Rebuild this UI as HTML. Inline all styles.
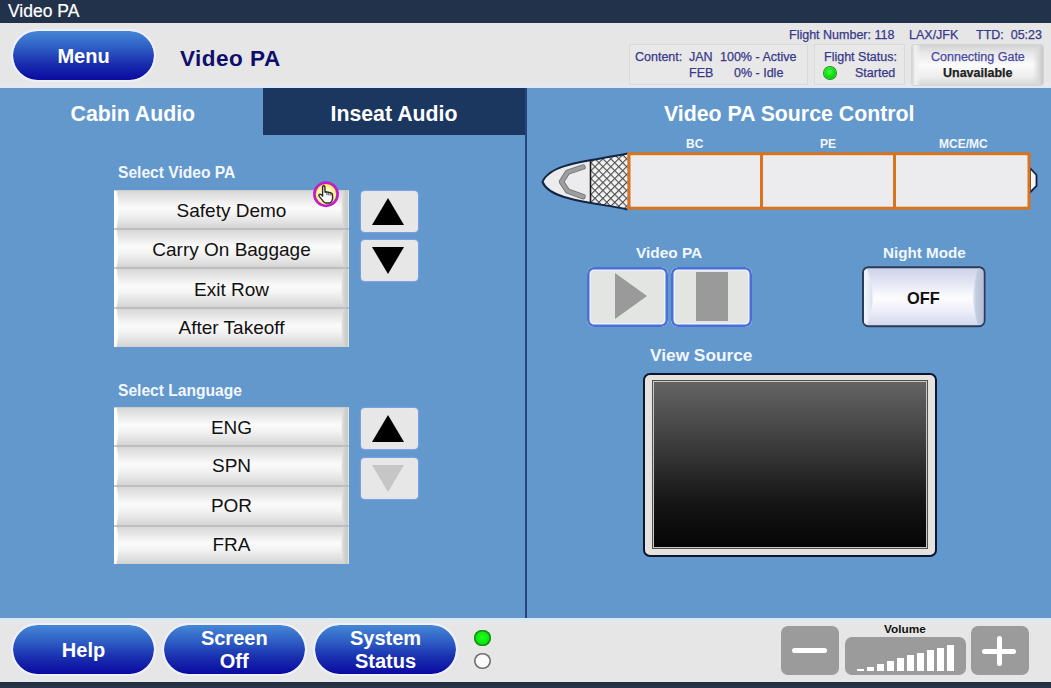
<!DOCTYPE html>
<html><head><meta charset="utf-8">
<style>
*{margin:0;padding:0;box-sizing:border-box}
html,body{width:1051px;height:688px;overflow:hidden;background:#e6e6e6;font-family:"Liberation Sans",sans-serif}
.a{position:absolute}
#title{left:0;top:0;width:1051px;height:23px;background:#21324a}
#title span{position:absolute;left:8px;top:0.5px;font-size:17.5px;color:#fff;line-height:20px;-webkit-text-stroke:0.2px #fff}
#topband{left:0;top:23px;width:1051px;height:65px;background:linear-gradient(#e6e6e6 0,#e6e6e6 58px,#e9e8e6 61px,#e0e9f8 63px,#dde8f8 65px)}
#blue{left:0;top:88px;width:1051px;height:530px;background:#6398cd;border-top:1px solid #6e93c2}
#botband{left:0;top:618px;width:1051px;height:64px;background:linear-gradient(#e6e6e6 0,#e6e6e6 56px,#e6e8ec 58px,#e6e8ec 64px);border-top:4px solid #dceaf0}
#dark{left:0;top:682px;width:1051px;height:6px;background:linear-gradient(#222e3e,#253548)}
.pill{position:absolute;border-radius:27px;background:linear-gradient(#4587d6 0%,#2d5cc4 35%,#1a30b0 65%,#0a0aa0 100%) padding-box;border:2px solid #eef0ff;color:#fff;font-weight:bold;text-align:center}
.lbl{position:absolute;color:#f2f7ff;font-weight:bold;white-space:nowrap;line-height:1}
.txt{position:absolute;white-space:nowrap;line-height:1}
.info{position:absolute;white-space:nowrap;line-height:1;font-size:12.5px;color:#383888;margin-top:0.5px;-webkit-text-stroke:0.25px currentColor}
.box{position:absolute;border:1px solid #dadada;background:#e8e8e8}
.lst{position:absolute;left:114px;width:235px;height:39px;font-size:19px;color:#111;text-align:center;line-height:39px;
 background:
  linear-gradient(90deg,rgba(255,255,255,0) 0,#fff 1.5px,#fff 3px,rgba(255,255,255,0) 8px,rgba(255,255,255,0) 227px,rgba(160,160,160,.5) 231px,rgba(190,190,190,.6) 235px),
  linear-gradient(#b8b8b8 0,#d8d8d8 1.5px,#e8e8e8 20%,#fafafa 45%,#f2f2f2 60%,#dcdcdc 88%,#cdcdcd 100%)}
.arr{position:absolute;left:361px;width:57px;height:40.5px;background:#e7e7e7;border-radius:4px;box-shadow:0 0 0 1.2px #789fe4}
.tri{position:absolute;width:0;height:0}
</style></head><body>
<div id="title" class="a"><span>Video PA</span></div>
<div id="topband" class="a"></div>
<div id="blue" class="a"></div>
<div id="botband" class="a"></div>
<div id="dark" class="a"></div>

<!-- Menu -->
<div class="pill" style="left:11px;top:28.5px;width:145px;height:53px;font-size:20px;line-height:50px">Menu</div>
<div class="txt" style="left:180px;top:47.5px;font-size:22.5px;letter-spacing:0.5px;font-weight:bold;color:#0e0e6c">Video PA</div>

<!-- top right info -->
<div class="info" style="left:789px;top:28px">Flight Number: 118</div>
<div class="info" style="left:909px;top:28px">LAX/JFK</div>
<div class="info" style="left:976px;top:28px">TTD:&nbsp; 05:23</div>

<div class="box" style="left:629px;top:44px;width:179px;height:41px"></div>
<div class="info" style="left:635px;top:50px">Content:</div>
<div class="info" style="left:689px;top:50px">JAN</div>
<div class="info" style="left:720px;top:50px">100% - Active</div>
<div class="info" style="left:689px;top:66px">FEB</div>
<div class="info" style="left:734px;top:66px">0% - Idle</div>

<div class="box" style="left:814px;top:44px;width:91px;height:41px"></div>
<div class="info" style="left:824px;top:50px">Flight Status:</div>
<div class="a" style="left:824px;top:67px;width:12px;height:12px;border-radius:50%;background:radial-gradient(circle at 45% 40%,#3cff3c,#00d000 70%);box-shadow:0 0 0 1px #1f8a1f"></div>
<div class="info" style="left:855px;top:66px">Started</div>

<div class="a" style="left:912px;top:45px;width:131px;height:40px;border-radius:3px;box-shadow:0 0 0 1px #d4d4d4;background:linear-gradient(90deg,#d2d2d2 0,#f2f2f2 3px,rgba(255,255,255,0) 9px,rgba(255,255,255,0) 121px,#dadada 127px,#c6c6c6 131px),linear-gradient(#d2d2d2 0,#e6e6e6 18%,#fbfbfb 50%,#ededed 80%,#d6d6d6 100%)"></div>
<div class="info" style="left:931px;top:50px;color:#4a4aa2">Connecting Gate</div>
<div class="info" style="left:943px;top:66px;font-weight:bold;color:#222">Unavailable</div>

<!-- tabs -->
<div class="a" style="left:263px;top:88px;width:264px;height:47px;background:#1b365f"></div>
<div class="lbl" style="left:70.5px;top:103.5px;font-size:21.3px;color:#fff">Cabin Audio</div>
<div class="lbl" style="left:330.5px;top:103.5px;font-size:21.3px;color:#fff">Inseat Audio</div>
<div class="a" style="left:525px;top:88px;width:2px;height:530px;background:#22467a"></div>

<!-- Select Video PA -->
<div class="lbl" style="left:118px;top:164.5px;font-size:15.6px">Select Video PA</div>
<svg class="a" style="left:114px;top:190px" width="235" height="157" viewBox="0 0 235 157">
<defs><linearGradient id="lg1" x1="0" y1="0" x2="0" y2="1"><stop offset="0" stop-color="#d6d6d6"/><stop offset="0.18" stop-color="#e4e4e4"/><stop offset="0.45" stop-color="#fbfbfb"/><stop offset="0.62" stop-color="#f3f3f3"/><stop offset="0.85" stop-color="#e0e0e0"/><stop offset="1" stop-color="#d2d2d2"/></linearGradient><linearGradient id="lg1r" x1="0" y1="0" x2="1" y2="0"><stop offset="0" stop-color="#e2e2e0"/><stop offset="0.5" stop-color="#cfcfcc"/><stop offset="1" stop-color="#c9c9c6"/></linearGradient></defs>
<rect x="0" y="0" width="235" height="39" fill="url(#lg1)"/>
<path d="M0 0 L2.5 0 Q6.5 19.5 2.5 39 L0 39 Z" fill="#ffffff" opacity="0.95"/>
<path d="M235 0 L229.5 0 Q225.5 19.5 229.5 39 L235 39 Z" fill="url(#lg1r)"/>
<rect x="234" y="0" width="1" height="39" fill="#d8e6f0"/>
<text x="117.5" y="27.3" text-anchor="middle" font-family="Liberation Sans" font-size="19" fill="#111">Safety Demo</text>
<rect x="0" y="39" width="235" height="39" fill="url(#lg1)"/>
<path d="M0 39 L2.5 39 Q6.5 58.5 2.5 78 L0 78 Z" fill="#ffffff" opacity="0.95"/>
<path d="M235 39 L229.5 39 Q225.5 58.5 229.5 78 L235 78 Z" fill="url(#lg1r)"/>
<rect x="234" y="39" width="1" height="39" fill="#d8e6f0"/>
<rect x="0" y="38.25" width="235" height="1.5" fill="#b6b6b6"/>
<text x="117.5" y="65.7" text-anchor="middle" font-family="Liberation Sans" font-size="19" fill="#111">Carry On Baggage</text>
<rect x="0" y="78" width="235" height="40" fill="url(#lg1)"/>
<path d="M0 78 L2.5 78 Q6.5 98.0 2.5 118 L0 118 Z" fill="#ffffff" opacity="0.95"/>
<path d="M235 78 L229.5 78 Q225.5 98.0 229.5 118 L235 118 Z" fill="url(#lg1r)"/>
<rect x="234" y="78" width="1" height="40" fill="#d8e6f0"/>
<rect x="0" y="77.25" width="235" height="1.5" fill="#b6b6b6"/>
<text x="117.5" y="105.7" text-anchor="middle" font-family="Liberation Sans" font-size="19" fill="#111">Exit Row</text>
<rect x="0" y="118" width="235" height="39" fill="url(#lg1)"/>
<path d="M0 118 L2.5 118 Q6.5 137.5 2.5 157 L0 157 Z" fill="#ffffff" opacity="0.95"/>
<path d="M235 118 L229.5 118 Q225.5 137.5 229.5 157 L235 157 Z" fill="url(#lg1r)"/>
<rect x="234" y="118" width="1" height="39" fill="#d8e6f0"/>
<rect x="0" y="117.25" width="235" height="1.5" fill="#b6b6b6"/>
<text x="117.5" y="143.7" text-anchor="middle" font-family="Liberation Sans" font-size="19" fill="#111">After Takeoff</text>
<rect x="0" y="0" width="235" height="1" fill="#cdc9c0" opacity="0.8"/>
</svg>
<div class="arr" style="top:191px"><div class="tri" style="left:11px;top:7px;border-left:16.8px solid transparent;border-right:16.8px solid transparent;border-bottom:27px solid #000"></div></div>
<div class="arr" style="top:240px"><div class="tri" style="left:11px;top:6.5px;border-left:16.8px solid transparent;border-right:16.8px solid transparent;border-top:27.5px solid #000"></div></div>

<!-- Select Language -->
<div class="lbl" style="left:118px;top:382.5px;font-size:15.6px">Select Language</div>
<svg class="a" style="left:114px;top:407px" width="235" height="157" viewBox="0 0 235 157">
<defs><linearGradient id="lg2" x1="0" y1="0" x2="0" y2="1"><stop offset="0" stop-color="#d6d6d6"/><stop offset="0.18" stop-color="#e4e4e4"/><stop offset="0.45" stop-color="#fbfbfb"/><stop offset="0.62" stop-color="#f3f3f3"/><stop offset="0.85" stop-color="#e0e0e0"/><stop offset="1" stop-color="#d2d2d2"/></linearGradient><linearGradient id="lg2r" x1="0" y1="0" x2="1" y2="0"><stop offset="0" stop-color="#e2e2e0"/><stop offset="0.5" stop-color="#cfcfcc"/><stop offset="1" stop-color="#c9c9c6"/></linearGradient></defs>
<rect x="0" y="0" width="235" height="39" fill="url(#lg2)"/>
<path d="M0 0 L2.5 0 Q6.5 19.5 2.5 39 L0 39 Z" fill="#ffffff" opacity="0.95"/>
<path d="M235 0 L229.5 0 Q225.5 19.5 229.5 39 L235 39 Z" fill="url(#lg2r)"/>
<rect x="234" y="0" width="1" height="39" fill="#d8e6f0"/>
<text x="117.5" y="26.8" text-anchor="middle" font-family="Liberation Sans" font-size="19" fill="#111">ENG</text>
<rect x="0" y="39" width="235" height="40" fill="url(#lg2)"/>
<path d="M0 39 L2.5 39 Q6.5 59.0 2.5 79 L0 79 Z" fill="#ffffff" opacity="0.95"/>
<path d="M235 39 L229.5 39 Q225.5 59.0 229.5 79 L235 79 Z" fill="url(#lg2r)"/>
<rect x="234" y="39" width="1" height="40" fill="#d8e6f0"/>
<rect x="0" y="38.25" width="235" height="1.5" fill="#b6b6b6"/>
<text x="117.5" y="65" text-anchor="middle" font-family="Liberation Sans" font-size="19" fill="#111">SPN</text>
<rect x="0" y="79" width="235" height="40" fill="url(#lg2)"/>
<path d="M0 79 L2.5 79 Q6.5 99.0 2.5 119 L0 119 Z" fill="#ffffff" opacity="0.95"/>
<path d="M235 79 L229.5 79 Q225.5 99.0 229.5 119 L235 119 Z" fill="url(#lg2r)"/>
<rect x="234" y="79" width="1" height="40" fill="#d8e6f0"/>
<rect x="0" y="78.25" width="235" height="1.5" fill="#b6b6b6"/>
<text x="117.5" y="105.3" text-anchor="middle" font-family="Liberation Sans" font-size="19" fill="#111">POR</text>
<rect x="0" y="119" width="235" height="38" fill="url(#lg2)"/>
<path d="M0 119 L2.5 119 Q6.5 138.0 2.5 157 L0 157 Z" fill="#ffffff" opacity="0.95"/>
<path d="M235 119 L229.5 119 Q225.5 138.0 229.5 157 L235 157 Z" fill="url(#lg2r)"/>
<rect x="234" y="119" width="1" height="38" fill="#d8e6f0"/>
<rect x="0" y="118.25" width="235" height="1.5" fill="#b6b6b6"/>
<text x="117.5" y="144" text-anchor="middle" font-family="Liberation Sans" font-size="19" fill="#111">FRA</text>
<rect x="0" y="0" width="235" height="1" fill="#cdc9c0" opacity="0.8"/>
</svg>
<div class="arr" style="top:408px"><div class="tri" style="left:11px;top:7px;border-left:16.8px solid transparent;border-right:16.8px solid transparent;border-bottom:27px solid #000"></div></div>
<div class="arr" style="top:458px"><div class="tri" style="left:11px;top:6.5px;border-left:16.8px solid transparent;border-right:16.8px solid transparent;border-top:27.5px solid #c6c6c6"></div></div>

<!-- cursor -->
<svg class="a" style="left:312px;top:181px" width="28" height="28" viewBox="0 0 28 28">
 <defs><radialGradient id="cg" cx="50%" cy="55%" r="50%"><stop offset="0" stop-color="#ffffff"/><stop offset="0.55" stop-color="#fff8c8"/><stop offset="1" stop-color="#ffee50"/></radialGradient></defs>
 <circle cx="14" cy="13.2" r="11.6" fill="url(#cg)" stroke="#c21ec8" stroke-width="2.7"/>
 <path d="M10.6 5.6 Q11.6 3.9 12.8 5.4 L13.1 11.2 Q13.9 10.4 14.9 11.3 Q15.9 10.6 16.8 11.6 Q17.9 11.1 18.9 11.9 Q20.4 12.2 20.5 13.6 L20.6 17.2 Q20.3 21.2 17.4 22 L14 22 Q12.2 21.8 11.3 20.4 L7.2 15.4 Q6.4 14 7.6 13.4 Q8.8 13 10.2 14.6 L10.6 15.2 Z" fill="#fff" stroke="#2a2a2a" stroke-width="1.4" stroke-linejoin="round"/>
 <path d="M14.9 11.3 L15 14.2 M16.8 11.6 L16.9 14.4 M18.9 11.9 L18.9 14.6" stroke="#2a2a2a" stroke-width="0.9" fill="none"/>
</svg>

<!-- Right: Source control -->
<div class="lbl" style="left:664px;top:104px;font-size:21.3px;color:#fff">Video PA Source Control</div>
<div class="lbl" style="left:686px;top:138px;font-size:12px">BC</div>
<div class="lbl" style="left:820px;top:138px;font-size:12px">PE</div>
<div class="lbl" style="left:939px;top:138px;font-size:12px">MCE/MC</div>

<svg class="a" style="left:530px;top:140px" width="521" height="80" viewBox="530 140 521 80">
 <defs>
  <pattern id="mesh" width="5.6" height="5.6" patternUnits="userSpaceOnUse" patternTransform="translate(591 154) rotate(45)">
   <rect width="5.6" height="5.6" fill="#f4f4f4"/>
   <rect x="0" y="0" width="1.1" height="5.6" fill="#4a4a4a"/>
   <rect x="0" y="0" width="5.6" height="1.1" fill="#4a4a4a"/>
  </pattern>
 </defs>
 <path d="M1030 168 L1036.5 175 L1036.5 186 L1030 192.5 Z" fill="#f6f6f6" stroke="#10203e" stroke-width="1.8"/>
 <path d="M627.5 153.6 C591.9 161 550 162.7 542.5 182 C550 200.3 591.9 202 627.5 209.4 Z" fill="#ececee"/>
 <path d="M590.5 160.4 L627.5 153.6 L627.5 209.4 L590.5 202.6 Z" fill="url(#mesh)"/>
 <path d="M627.5 153.6 C591.9 161 550 162.7 542.5 182 C550 200.3 591.9 202 627.5 209.4" fill="none" stroke="#142444" stroke-width="2"/>
 <line x1="590.5" y1="160.4" x2="590.5" y2="202.6" stroke="#1b1b1b" stroke-width="1.6"/>
 <path d="M583 167 L567.5 172.3 L561.5 181.7 L567.5 191 L583 196.6" fill="none" stroke="#707070" stroke-width="5.4" stroke-linecap="round" stroke-linejoin="round"/>
 <path d="M583 167 L567.5 172.3 L561.5 181.7 L567.5 191 L583 196.6" fill="none" stroke="#9e9e9e" stroke-width="3.8" stroke-linecap="round" stroke-linejoin="round"/>
 <rect x="629" y="153.7" width="400" height="54.5" fill="#ecebee" stroke="#d8731f" stroke-width="3"/>
 <line x1="761.5" y1="153.7" x2="761.5" y2="208.2" stroke="#d8731f" stroke-width="3"/>
 <line x1="894.5" y1="153.7" x2="894.5" y2="208.2" stroke="#d8731f" stroke-width="3"/>
</svg>

<!-- Video PA controls -->
<div class="lbl" style="left:636px;top:245px;font-size:15.4px">Video PA</div>
<div class="a" style="left:587px;top:267px;width:80.5px;height:60px;border-radius:7px;background:#e3e5e3;box-shadow:inset 0 0 0 2.5px #4a70d6,inset 0 0 0 4px #eef2ff"></div>
<div class="a" style="left:671px;top:267px;width:80.5px;height:60px;border-radius:7px;background:#e3e5e3;box-shadow:inset 0 0 0 2.5px #4a70d6,inset 0 0 0 4px #eef2ff"></div>
<div class="tri a" style="left:615px;top:273px;border-top:23px solid transparent;border-bottom:23px solid transparent;border-left:32px solid #9a9a9a"></div>
<div class="a" style="left:696px;top:272px;width:32px;height:49px;background:#9a9a9a"></div>

<div class="lbl" style="left:883px;top:245px;font-size:15.2px">Night Mode</div>
<svg class="a" style="left:862px;top:266px" width="124" height="62" viewBox="0 0 124 62">
 <defs>
  <linearGradient id="offg" x1="0" y1="0" x2="0" y2="1"><stop offset="0" stop-color="#cdd1e8"/><stop offset="0.25" stop-color="#e2e5f3"/><stop offset="0.52" stop-color="#fdfdff"/><stop offset="0.78" stop-color="#e9ebf7"/><stop offset="1" stop-color="#d2d6ee"/></linearGradient>
  <linearGradient id="offl" x1="0" y1="0" x2="1" y2="0"><stop offset="0" stop-color="#f4f7fb"/><stop offset="0.6" stop-color="#e6ecf4"/><stop offset="1" stop-color="#d8e0ee"/></linearGradient>
  <linearGradient id="offr" x1="0" y1="0" x2="1" y2="0"><stop offset="0" stop-color="#e4ecf8"/><stop offset="0.3" stop-color="#c2cde0"/><stop offset="1" stop-color="#b4c0d6"/></linearGradient>
 </defs>
 <rect x="1" y="1.2" width="121.5" height="59" rx="5.5" fill="url(#offg)" stroke="#2b3b5a" stroke-width="2"/>
 <path d="M3 4 Q6 2.2 5 2.2 Q11 20 10.5 31 Q11 42 5 58.8 Q3 58 2.2 57 L2.2 5 Z" fill="url(#offl)"/>
 <path d="M121 4 Q118 2.2 116 2.2 Q111 20 110.8 31 Q111 42 116 58.8 Q119 58 121.4 57 L121.4 5 Z" fill="url(#offr)"/>
</svg>
<div class="lbl" style="left:907px;top:290px;font-size:16.4px;color:#111">OFF</div>

<!-- View Source -->
<div class="lbl" style="left:650px;top:347px;font-size:17.3px">View Source</div>
<div class="a" style="left:643px;top:373px;width:294px;height:184px;border-radius:7px;background:#e6e2de;border:2px solid #0c1630"></div>
<div class="a" style="left:652px;top:380px;width:276px;height:169px;border:1px solid #505050;background:#c8c8c8;padding:1px">
 <div style="width:100%;height:100%;background:linear-gradient(#646464 0%,#3c3c3c 38%,#161616 72%,#050505 100%)"></div>
</div>

<!-- bottom buttons -->
<div class="pill" style="left:11px;top:622.5px;width:145px;height:53px;font-size:20px;line-height:50px;padding-top:0px">Help</div>
<div class="pill" style="left:162px;top:622.5px;width:144.5px;height:53px;font-size:20px;line-height:23px;padding-top:2.5px">Screen<br>Off</div>
<div class="pill" style="left:313px;top:622.5px;width:145px;height:53px;font-size:20px;line-height:23px;padding-top:2.5px">System<br>Status</div>
<div class="a" style="left:474px;top:629.5px;width:16.5px;height:16.5px;border-radius:50%;background:radial-gradient(circle at 50% 45%,#22ff22,#00e000 70%);box-shadow:inset 0 0 0 1.6px #1d8a1d"></div>
<div class="a" style="left:474px;top:652.5px;width:16.5px;height:16.5px;border-radius:50%;background:#fafafa;box-shadow:inset 0 0 0 1.6px #6e6e6e"></div>

<!-- volume -->
<div class="a" style="left:781px;top:626px;width:58px;height:49px;border-radius:7px;background:#9b9b9b"></div>
<div class="a" style="left:792px;top:648px;width:35px;height:5px;border-radius:2.5px;background:#fff"></div>
<div class="txt" style="left:884px;top:624px;font-size:11.8px;font-weight:bold;color:#111">Volume</div>
<div class="a" style="left:845px;top:637px;width:121px;height:38px;border-radius:7px;background:#9b9b9b"></div>
<div class="a" style="left:971px;top:626px;width:58px;height:49px;border-radius:7px;background:#9b9b9b"></div>
<div class="a" style="left:982px;top:649px;width:34px;height:5px;border-radius:2.5px;background:#fff"></div>
<div class="a" style="left:996.5px;top:636px;width:5px;height:30px;border-radius:2.5px;background:#fff"></div>
<div class="a" style="left:856.5px;top:668.9px;width:7.2px;height:2.4px;background:#fff"></div>
<div class="a" style="left:866.5px;top:667px;width:7.2px;height:4.3px;background:#fff"></div>
<div class="a" style="left:876.5px;top:663.8px;width:7.2px;height:7.5px;background:#fff"></div>
<div class="a" style="left:886.5px;top:660.7px;width:7.2px;height:10.6px;background:#fff"></div>
<div class="a" style="left:896.5px;top:658.4px;width:7.2px;height:12.9px;background:#fff"></div>
<div class="a" style="left:906.5px;top:655.3px;width:7.2px;height:16.0px;background:#fff"></div>
<div class="a" style="left:916.5px;top:653px;width:7.2px;height:18.3px;background:#fff"></div>
<div class="a" style="left:926.5px;top:650.2px;width:7.2px;height:21.1px;background:#fff"></div>
<div class="a" style="left:936.5px;top:647.6px;width:7.2px;height:23.7px;background:#fff"></div>
<div class="a" style="left:946.5px;top:645px;width:7.2px;height:26.3px;background:#fff"></div>

</body></html>
